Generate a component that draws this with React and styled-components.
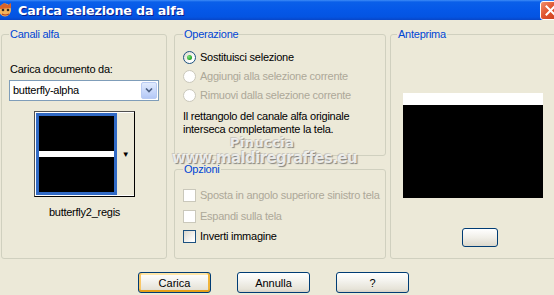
import React from 'react'
import styled, { createGlobalStyle } from 'styled-components'

const GlobalStyle = createGlobalStyle`
  html, body {
    margin: 0;
    padding: 0;
    overflow: hidden;
    background: #ECE9D8;
  }
`

const Window = styled.div`
  position: relative;
  width: 567px;
  height: 295px;
  margin-left: -1px;
  background: #ECE9D8;
  font-family: "Liberation Sans", Arial, sans-serif;
  font-size: 11px;
  line-height: 13px;
  letter-spacing: -0.25px;
  color: #000;
  overflow: hidden;
`

const TitleBar = styled.div`
  height: 20px;
  display: flex;
  align-items: center;
  justify-content: space-between;
  padding: 0 5px 0 0;
  background: linear-gradient(to bottom, #3d8cf7 0%, #0a5fe9 10%, #0558e8 50%, #0454e2 85%, #0846c8 100%);
`

const TitleLeft = styled.div`
  display: flex;
  align-items: center;
  gap: 5px;
`

const TitleText = styled.span`
  color: #fff;
  font-family: "DejaVu Sans", "Liberation Sans", sans-serif;
  font-weight: bold;
  font-size: 12.7px;
  letter-spacing: -0.15px;
  text-shadow: 1px 1px 0 #0a1e8a;
`

const CloseButton = styled.div`
  width: 21px;
  height: 19px;
  margin-top: 1px;
  box-sizing: border-box;
  border: 1px solid #fff;
  border-radius: 3px;
  background: linear-gradient(135deg, #f0906c 0%, #e0532f 45%, #c93e1d 100%);
  display: flex;
  align-items: center;
  justify-content: center;
`

const Body = styled.div`
  display: flex;
  padding: 8px 0 0 2px;
  height: 231px;
`

const Group = styled.fieldset`
  margin: 0;
  box-sizing: border-box;
  min-width: 0;
  border: 1px solid #D0D0BF;
  border-radius: 3px;
  padding: 0 ${p => p.$pad || 7}px 0 ${p => p.$pad || 7}px;
  width: ${p => p.$w ? `${p.$w}px` : 'auto'};
  height: ${p => p.$h}px;
  flex: ${p => p.$w ? 'none' : '1'};
`

const Legend = styled.legend`
  padding: 0 1px;
  color: #0046D5;
  font-size: 11px;
  line-height: 13px;
`

const Column = styled.div`
  display: flex;
  flex-direction: column;
  gap: 7px;
  margin: 0 4px 0 7px;
`

const FieldLabel = styled.div`
  margin-top: 22px;
  padding-left: 1px;
`

const Select = styled.div`
  margin-top: 4px;
  width: 150px;
  height: 21px;
  box-sizing: border-box;
  border: 1px solid #7F9DB9;
  background: #fff;
  display: flex;
  align-items: center;
  justify-content: space-between;
  padding: 0 1px 0 3px;
`

const SelectButton = styled.div`
  width: 16px;
  height: 17px;
  box-sizing: border-box;
  border: 1px solid #B9CBF3;
  border-radius: 2px;
  background: linear-gradient(to bottom, #E1EBFD 0%, #C6D6FA 60%, #B4C8F6 100%);
  display: flex;
  align-items: center;
  justify-content: center;
`

const ThumbFrame = styled.div`
  margin: 10px 0 0 25px;
  width: 101px;
  height: 86px;
  box-sizing: border-box;
  border: 1px solid #000;
  border-color: #505050 #000 #000 #505050;
  padding: 1px 0 0 1px;
  background: #fff;
  display: flex;
`

const Thumb = styled.div`
  width: 81px;
  height: 82px;
  box-sizing: border-box;
  border: 3px solid #316AC5;
  background: #000;
  padding-top: 35px;
`

const Stripe = styled.div`
  height: ${p => p.$h}px;
  background: #fff;
`

const ThumbArrow = styled.div`
  flex: 1;
  background: #ECE9D8;
  border-bottom: 1px solid #fff;
  display: flex;
  align-items: center;
  justify-content: center;
  font-size: 8px;
`

const Caption = styled.div`
  margin-top: 9px;
  text-align: center;
  padding-left: 1px;
`

const OptionList = styled.div`
  display: flex;
  flex-direction: column;
  gap: ${p => p.$gap}px;
  margin-top: ${p => p.$top}px;
`

const OptionRow = styled.label`
  display: flex;
  align-items: center;
  gap: 4px;
  height: 13px;
  white-space: nowrap;
  color: ${p => (p.$disabled ? '#ACA899' : '#000')};
`

const Radio = styled.span`
  flex: none;
  width: 13px;
  height: 13px;
  box-sizing: border-box;
  border-radius: 50%;
  border: 1px solid ${p => (p.$disabled ? '#CAC8BB' : '#1C5180')};
  background: ${p => (p.$disabled ? '#fff' : 'linear-gradient(135deg, #DCD7CB 0%, #fff 70%)')};
  display: flex;
  align-items: center;
  justify-content: center;
  &::after {
    content: '';
    display: ${p => (p.$checked ? 'block' : 'none')};
    width: 5px;
    height: 5px;
    border-radius: 50%;
    background: radial-gradient(circle at 35% 35%, #7ee27e, #21A121 70%);
  }
`

const Check = styled.span`
  flex: none;
  width: 13px;
  height: 13px;
  box-sizing: border-box;
  border: 1px solid ${p => (p.$disabled ? '#CAC8BB' : '#1C5180')};
  background: ${p => (p.$disabled ? '#fff' : 'linear-gradient(135deg, #DCD7CB 0%, #fff 85%)')};
`

const Note = styled.p`
  margin: 8px 0 0 0;
`

const Preview = styled.div`
  margin: 52px 0 0 6px;
  width: 140px;
  height: 105px;
  background: #000;
`

const SmallButton = styled.div`
  margin: 30px 0 0 65px;
  width: 36px;
  height: 19px;
  box-sizing: border-box;
  border: 1px solid #003C74;
  border-radius: 3px;
  background: linear-gradient(to bottom, #fff 0%, #F1EFE8 50%, #DCD8CC 100%);
`

const ButtonRow = styled.div`
  display: flex;
  gap: 26px;
  padding: 13px 0 0 139px;
`

const Button = styled.button`
  width: 73px;
  height: 21px;
  box-sizing: border-box;
  border: 1px solid #003C74;
  border-radius: 3px;
  padding: 0;
  font-family: "Liberation Sans", Arial, sans-serif;
  font-size: 11px;
  color: #000;
  background: linear-gradient(to bottom, #fff 0%, #F4F3EE 40%, #E6E3D8 85%, #D6D0C5 100%);
  box-shadow: ${p => (p.$default ? 'inset 0 -2px 0 #E5A01A, inset 2px 0 0 #F9C766, inset -2px 0 0 #F0B43A, inset 0 2px 0 #FFE6A8' : 'none')};
`

const Watermark = styled.div`
  position: absolute;
  left: ${p => p.$x}px;
  top: ${p => p.$y}px;
  font-family: "DejaVu Sans", sans-serif;
  font-weight: bold;
  font-size: ${p => p.$size}px;
  letter-spacing: ${p => p.$ls}px;
  color: rgba(250, 250, 248, 0.85);
  text-shadow: 1px 1px 1px rgba(90, 90, 90, 0.7), -1px -1px 0 rgba(170, 170, 170, 0.5);
  pointer-events: none;
  white-space: nowrap;
`

function AppIcon() {
  return (
    <svg width="14" height="16" viewBox="0 0 14 16">
      <ellipse cx="6" cy="8" rx="6" ry="6.5" fill="#F4B35A" />
      <path d="M1 4 L5 1 L9 3 L12 1 L12 6 L1 7 Z" fill="#D8632A" />
      <circle cx="4" cy="8" r="1.3" fill="#3a2a20" />
      <circle cx="9" cy="8" r="1.3" fill="#3a2a20" />
      <path d="M3 12 Q6 14 10 12" stroke="#B03A20" strokeWidth="1.2" fill="none" />
    </svg>
  )
}

function CloseIcon() {
  return (
    <svg width="11" height="11" viewBox="0 0 11 11">
      <path d="M1.5 1.5 L9.5 9.5 M9.5 1.5 L1.5 9.5" stroke="#fff" strokeWidth="2" strokeLinecap="square" />
    </svg>
  )
}

function Chevron() {
  return (
    <svg width="8" height="5" viewBox="0 0 8 5">
      <path d="M1 0.5 L4 3.5 L7 0.5" stroke="#4D6185" strokeWidth="1.6" fill="none" />
    </svg>
  )
}

export default function App() {
  return (
    <>
      <GlobalStyle />
      <Window>
        <TitleBar>
          <TitleLeft>
            <AppIcon />
            <TitleText>Carica selezione da alfa</TitleText>
          </TitleLeft>
          <CloseButton><CloseIcon /></CloseButton>
        </TitleBar>

        <Body>
          <Group $w={166} $h={231}>
            <Legend>Canali alfa</Legend>
            <FieldLabel>Carica documento da:</FieldLabel>
            <Select>
              <span>butterfly-alpha</span>
              <SelectButton><Chevron /></SelectButton>
            </Select>
            <ThumbFrame>
              <Thumb><Stripe $h={6} /></Thumb>
              <ThumbArrow>▼</ThumbArrow>
            </ThumbFrame>
            <Caption>butterfly2_regis</Caption>
          </Group>

          <Column>
            <Group $w={212} $h={128} $pad={8}>
              <Legend>Operazione</Legend>
              <OptionList $gap={6} $top={10}>
                <OptionRow><Radio $checked />Sostituisci selezione</OptionRow>
                <OptionRow $disabled><Radio $disabled />Aggiungi alla selezione corrente</OptionRow>
                <OptionRow $disabled><Radio $disabled />Rimuovi dalla selezione corrente</OptionRow>
              </OptionList>
              <Note>
                Il rettangolo del canale alfa originale<br />
                interseca completamente la tela.
              </Note>
            </Group>
            <Group $w={212} $h={96} $pad={8}>
              <Legend>Opzioni</Legend>
              <OptionList $gap={7.5} $top={13}>
                <OptionRow $disabled><Check $disabled />Sposta in angolo superiore sinistro tela</OptionRow>
                <OptionRow $disabled><Check $disabled />Espandi sulla tela</OptionRow>
                <OptionRow><Check />Inverti immagine</OptionRow>
              </OptionList>
            </Group>
          </Column>

          <Group $h={231} $pad={6}>
            <Legend>Anteprima</Legend>
            <Preview><Stripe $h={12} /></Preview>
            <SmallButton />
          </Group>
        </Body>

        <ButtonRow>
          <Button $default>Carica</Button>
          <Button>Annulla</Button>
          <Button>?</Button>
        </ButtonRow>

        <Watermark $x={231} $y={136} $size={13} $ls={0.4}>Pinuccia</Watermark>
        <Watermark $x={173} $y={152} $size={15} $ls={-0.6}>www.maldiregraffes.eu</Watermark>
      </Window>
    </>
  )
}
